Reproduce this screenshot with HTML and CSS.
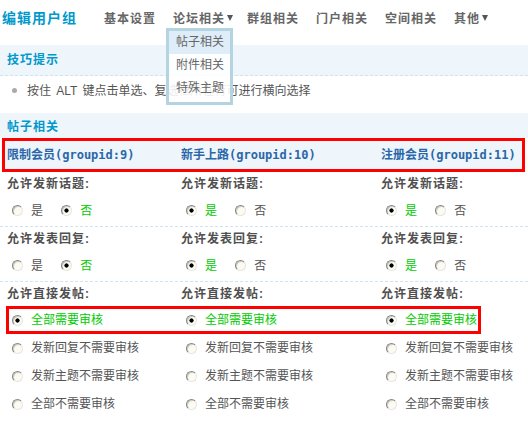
FILE: index.html
```html
<!DOCTYPE html>
<html>
<head>
  <meta charset="utf-8">
  <title>编辑用户组</title>
  <link rel="stylesheet" href="styles.css">
</head>
<body>
  <div class="page-head">
    <h1>编辑用户组</h1>
    <ul class="nav">
      <li>基本设置</li>
      <li class="has-menu">论坛相关<span class="caret"></span>
        <ul class="menu">
          <li class="on">帖子相关</li>
          <li>附件相关</li>
          <li>特殊主题</li>
        </ul>
      </li>
      <li>群组相关</li>
      <li>门户相关</li>
      <li>空间相关</li>
      <li>其他<span class="caret"></span></li>
    </ul>
  </div>

  <h3 class="band band-tips">技巧提示</h3>
  <ul class="tip-list">
    <li>按住 ALT 键点击单选、复选框所在行可进行横向选择</li>
  </ul>

  <h3 class="band band-section">帖子相关</h3>

  <div class="row row-head">
    <div>限制会员(groupid:9)</div>
    <div>新手上路(groupid:10)</div>
    <div>注册会员(groupid:11)</div>
  </div>

  <div class="row row-label">
    <div>允许发新话题:</div>
    <div>允许发新话题:</div>
    <div>允许发新话题:</div>
  </div>
  <div class="row row-radio">
    <div>
      <label class="opt"><input type="radio" name="post9"><span>是</span></label>
      <label class="opt"><input type="radio" name="post9" checked><span>否</span></label>
    </div>
    <div>
      <label class="opt"><input type="radio" name="post10" checked><span>是</span></label>
      <label class="opt"><input type="radio" name="post10"><span>否</span></label>
    </div>
    <div>
      <label class="opt"><input type="radio" name="post11" checked><span>是</span></label>
      <label class="opt"><input type="radio" name="post11"><span>否</span></label>
    </div>
  </div>

  <div class="row row-label">
    <div>允许发表回复:</div>
    <div>允许发表回复:</div>
    <div>允许发表回复:</div>
  </div>
  <div class="row row-radio">
    <div>
      <label class="opt"><input type="radio" name="reply9"><span>是</span></label>
      <label class="opt"><input type="radio" name="reply9" checked><span>否</span></label>
    </div>
    <div>
      <label class="opt"><input type="radio" name="reply10" checked><span>是</span></label>
      <label class="opt"><input type="radio" name="reply10"><span>否</span></label>
    </div>
    <div>
      <label class="opt"><input type="radio" name="reply11" checked><span>是</span></label>
      <label class="opt"><input type="radio" name="reply11"><span>否</span></label>
    </div>
  </div>

  <div class="row row-label">
    <div>允许直接发帖:</div>
    <div>允许直接发帖:</div>
    <div>允许直接发帖:</div>
  </div>
  <div class="row row-opt mark">
    <label class="opt"><input type="radio" name="mod9" checked><span>全部需要审核</span></label>
    <label class="opt"><input type="radio" name="mod10" checked><span>全部需要审核</span></label>
    <label class="opt"><input type="radio" name="mod11" checked><span>全部需要审核</span></label>
  </div>
  <div class="row row-opt">
    <label class="opt"><input type="radio" name="mod9"><span>发新回复不需要审核</span></label>
    <label class="opt"><input type="radio" name="mod10"><span>发新回复不需要审核</span></label>
    <label class="opt"><input type="radio" name="mod11"><span>发新回复不需要审核</span></label>
  </div>
  <div class="row row-opt">
    <label class="opt"><input type="radio" name="mod9"><span>发新主题不需要审核</span></label>
    <label class="opt"><input type="radio" name="mod10"><span>发新主题不需要审核</span></label>
    <label class="opt"><input type="radio" name="mod11"><span>发新主题不需要审核</span></label>
  </div>
  <div class="row row-opt">
    <label class="opt"><input type="radio" name="mod9"><span>全部不需要审核</span></label>
    <label class="opt"><input type="radio" name="mod10"><span>全部不需要审核</span></label>
    <label class="opt"><input type="radio" name="mod11"><span>全部不需要审核</span></label>
  </div>
</body>
</html>
```

FILE: styles.css
```css
body {
  margin: 0;
  background-color: #fff;
  color: #555;
  font-family: "Liberation Sans", "Noto Sans CJK SC", sans-serif;
  font-size: 12px;
}
ul {
  margin: 0;
  padding: 0;
  list-style: none;
}

/* page title + top tabs */
.page-head {
  display: flex;
  align-items: flex-start;
  height: 45px;
  box-sizing: border-box;
  padding: 10px 0 0 2px;
}
h1 {
  margin: 0;
  color: #09c;
  font-size: 14px;
  line-height: 16px;
  letter-spacing: 1px;
}
.nav {
  display: flex;
  gap: 17px;
  margin-left: 27px;
}
.nav > li {
  position: relative;
  color: #666;
  font-weight: bold;
  line-height: 18px;
  letter-spacing: 1px;
  white-space: nowrap;
}
.caret {
  display: inline-block;
  width: 0;
  height: 0;
  margin: 0 -3px 0 2px;
  border-style: solid;
  border-width: 6px 3.5px 0;
  border-color: #555 transparent transparent;
  vertical-align: 2px;
}
.menu {
  position: absolute;
  left: -7px;
  top: 100%;
  z-index: 1;
  width: 67px;
  box-sizing: border-box;
  padding-bottom: 2px;
  border: 3px solid #b5d4e1;
  background-color: rgba(255, 255, 255, 0.88);
  font-weight: normal;
  letter-spacing: 0;
}
.menu li {
  height: 23px;
  line-height: 23px;
  padding-left: 7px;
  color: #666;
}
.menu li.on {
  background-color: #deedf8;
}

/* blue title bands */
.band {
  margin: 0;
  padding-left: 7px;
  background-color: #eef5fb;
  color: #09c;
  font-size: 12px;
  font-weight: bold;
  letter-spacing: 1px;
}
.band-tips {
  height: 30px;
  line-height: 30px;
  border-bottom: 1px dashed #cfe3f1;
}
.band-section {
  margin-top: 7px;
  height: 22px;
  padding-top: 3px;
  line-height: 22px;
}
.tip-list li {
  padding-left: 12px;
  line-height: 30px;
  color: #555;
  word-spacing: 2px;
}
.tip-list li::before {
  content: "";
  display: inline-block;
  width: 5px;
  height: 5px;
  margin-right: 10px;
  border-radius: 50%;
  background-color: #aaa;
  vertical-align: 2px;
}

/* three group columns */
.row {
  display: grid;
  grid-template-columns: 174px 200px 1fr;
  white-space: nowrap;
}
.row-head {
  height: 34px;
  box-sizing: border-box;
  margin: 0 3px 0 2px;
  padding-left: 2px;
  border: 3px solid #f00;
  background-color: #eef5fb;
  color: #2a67a8;
  font-family: "DejaVu Sans Mono", "Noto Sans CJK SC", monospace;
  font-weight: bold;
  line-height: 28px;
}
.row-label {
  height: 24px;
  padding-left: 7px;
  line-height: 24px;
  font-weight: bold;
  letter-spacing: 1px;
  color: #505050;
}
.row-radio {
  height: 30px;
  padding-left: 12px;
  align-items: center;
  border-bottom: 1px dashed #cfe3f1;
}
.row-opt {
  height: 28px;
  box-sizing: border-box;
  padding-left: 12px;
  align-items: center;
}
.row-opt.mark {
  width: 475px;
  margin-left: 6px;
  padding-left: 3px;
  border: 3px solid #f00;
}

.opt {
  display: inline-flex;
  align-items: center;
  line-height: 16px;
  color: #555;
}
.row-radio .opt + .opt {
  margin-left: 15px;
}
.opt input[type="radio"] {
  appearance: none;
  width: 11px;
  height: 11px;
  margin: 0 8px 0 0;
  border: 1px solid;
  border-color: #858585 #e8e6dc #e8e6dc #858585;
  border-radius: 50%;
  background-color: #fbfbf4;
  box-shadow: inset 1px 1px 0 #cfcdc2;
}
.opt input[type="radio"]:checked {
  background: radial-gradient(circle, #000 0 1.8px, #fbfbf4 2.4px);
}
.opt input[type="radio"]:checked + span {
  color: #0c0;
}
```
